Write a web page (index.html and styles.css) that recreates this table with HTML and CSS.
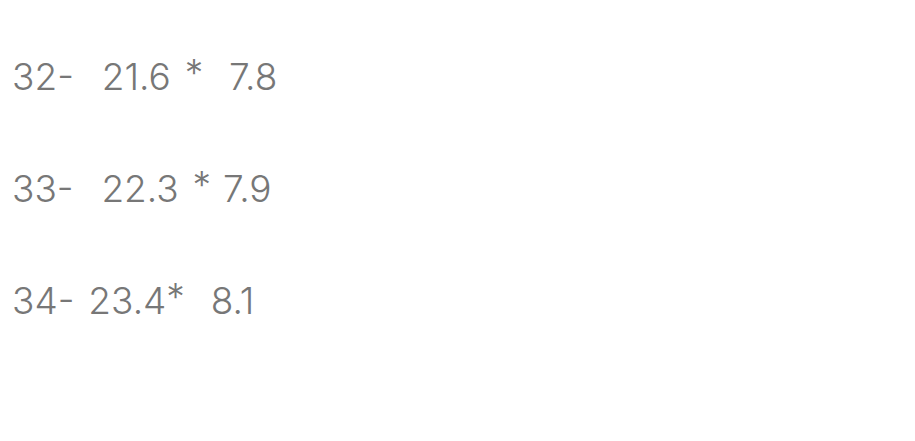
FILE: index.html
```html
<!DOCTYPE html>
<html lang="en">
<head>
  <meta charset="UTF-8" />
  <meta name="viewport" content="width=device-width, initial-scale=1.0"/>
  <title>Sizes</title>
  <link rel="stylesheet" href="styles.css">
</head>
<body>
  <main class="sizes">
    <p class="size-row">32-  21.6 <span class="times">*</span>  7.8</p>
    <p class="size-row">33-  22.3 <span class="times">*</span> 7.9</p>
    <p class="size-row">34- 23.4<span class="times">*</span>  8.1</p>
  </main>
</body>
</html>
```

FILE: styles.css
```css
body {
  margin: 0;
  background: #ffffff;
  font-family: Inter, "Open Sans", sans-serif;
  color: #777777;
}

.sizes {
  padding: 52px 12px 0;
}

.size-row {
  margin: 0 0 62px;
  font-size: 37px;
  font-weight: 300;
  line-height: 50px;
  white-space: pre;
  word-spacing: 3.5px;
}

.times {
  position: relative;
  top: -0.12em;
  letter-spacing: -2px;
}
```
